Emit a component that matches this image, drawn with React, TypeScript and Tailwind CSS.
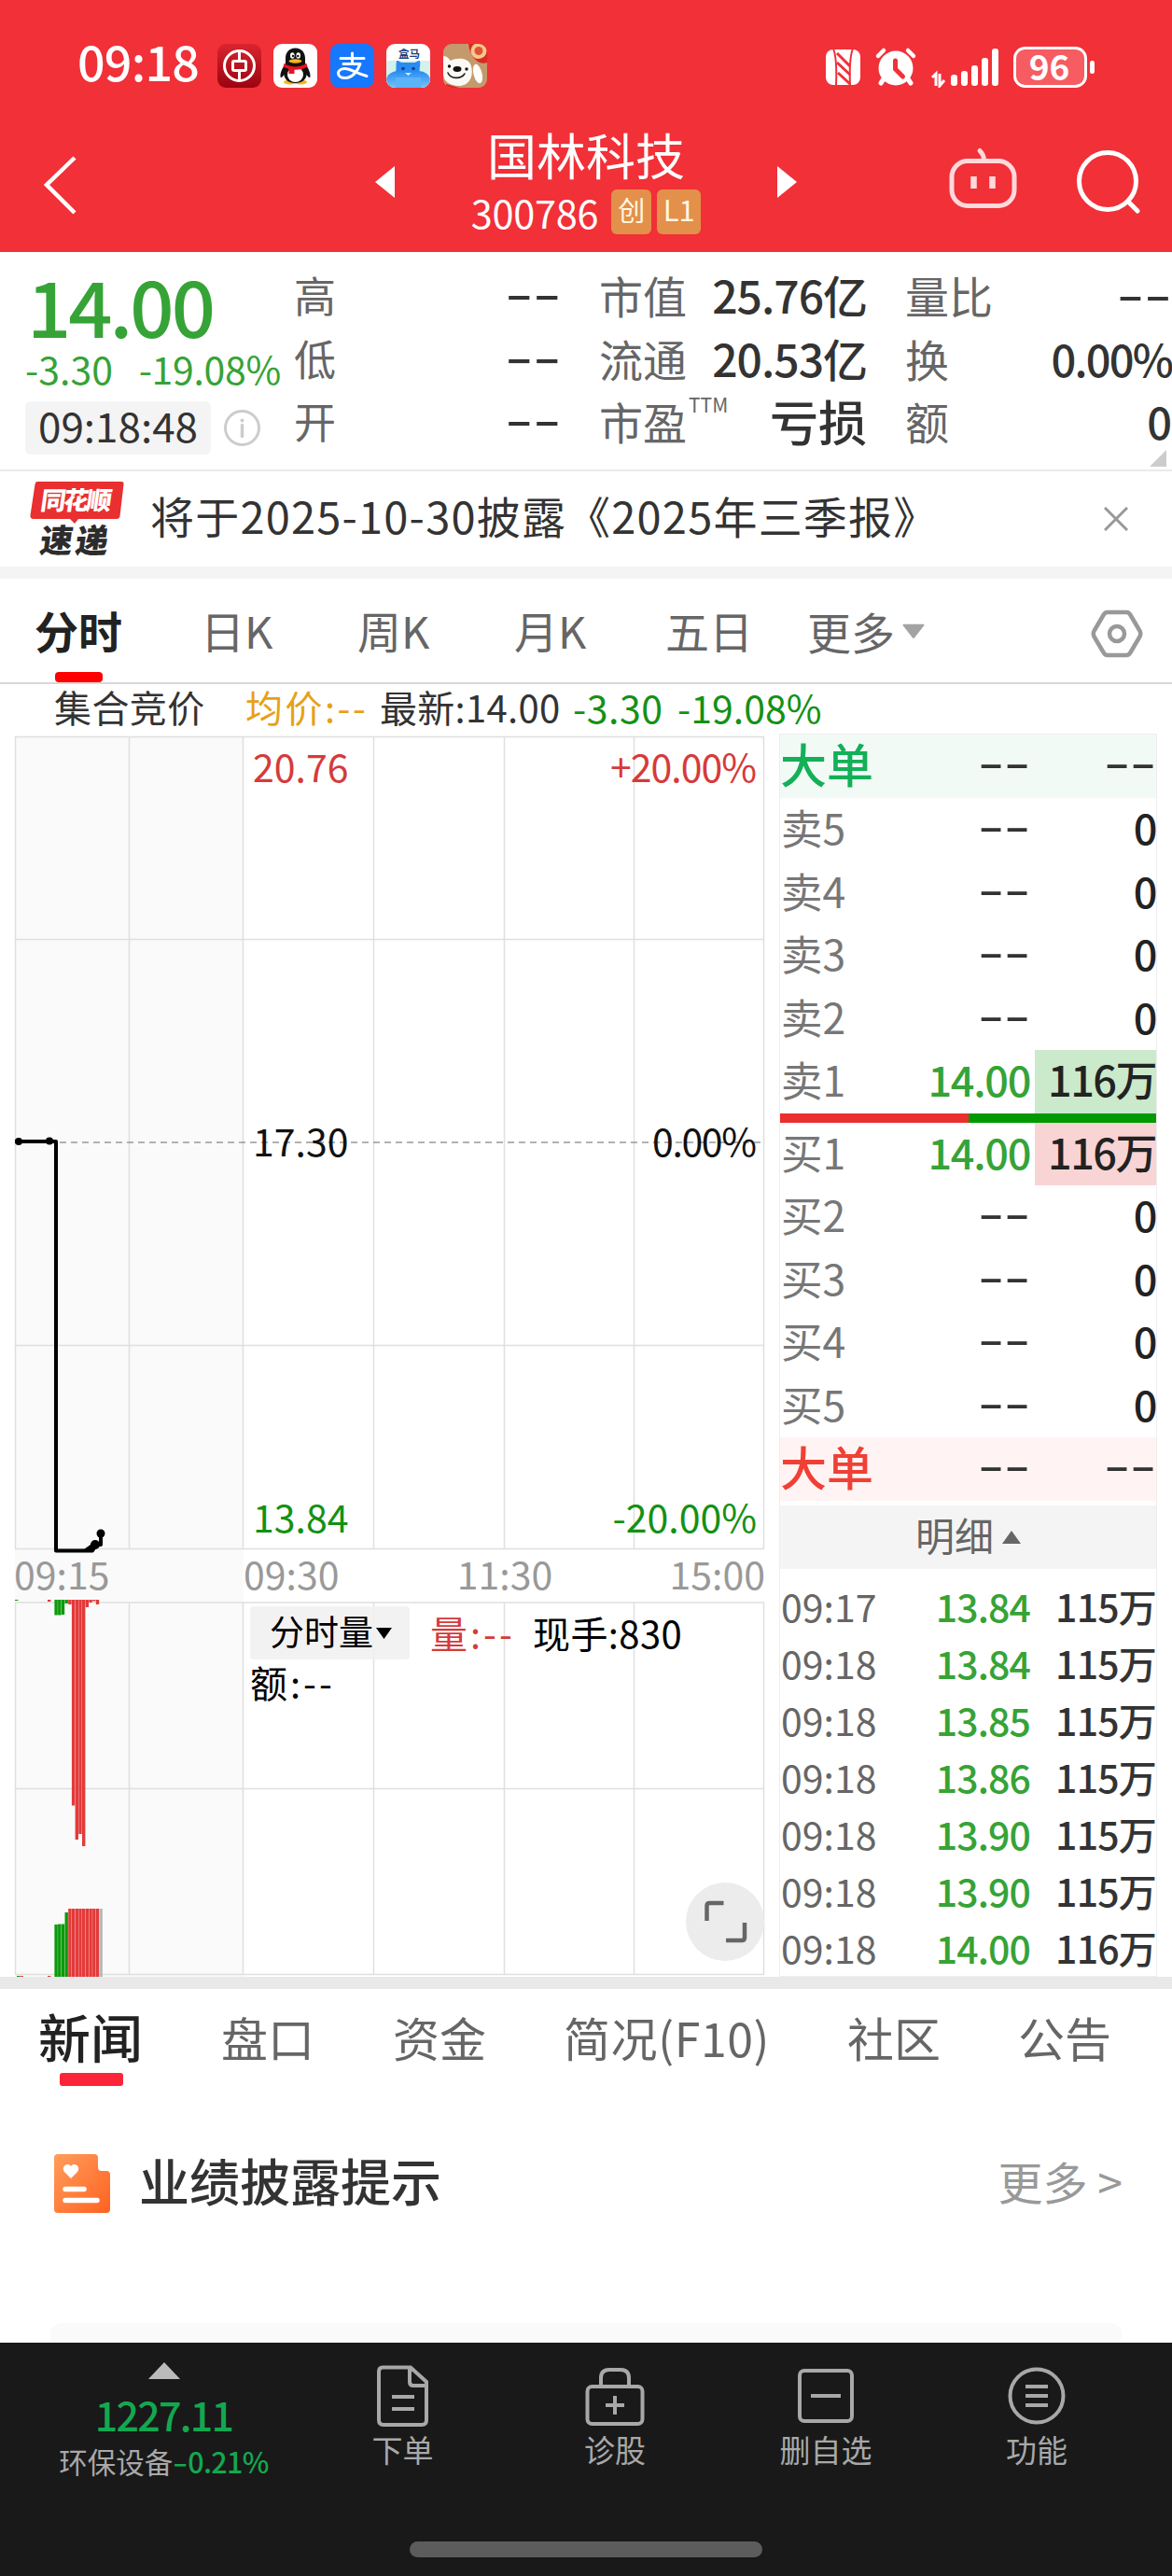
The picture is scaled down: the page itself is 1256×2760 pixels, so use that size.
import { ReactNode } from "react";

type BookRow = {
  label: string;
  price: string;
  volume: string;
  bg?: string;
};

const asks: BookRow[] = [
  { label: "卖5", price: "--", volume: "0" },
  { label: "卖4", price: "--", volume: "0" },
  { label: "卖3", price: "--", volume: "0" },
  { label: "卖2", price: "--", volume: "0" },
  { label: "卖1", price: "14.00", volume: "116万", bg: "bg-[#cbe9cb]" },
];

const bids: BookRow[] = [
  { label: "买1", price: "14.00", volume: "116万", bg: "bg-[#f9d4d4]" },
  { label: "买2", price: "--", volume: "0" },
  { label: "买3", price: "--", volume: "0" },
  { label: "买4", price: "--", volume: "0" },
  { label: "买5", price: "--", volume: "0" },
];

const trades = [
  { time: "09:17", price: "13.84", volume: "115万" },
  { time: "09:18", price: "13.84", volume: "115万" },
  { time: "09:18", price: "13.85", volume: "115万" },
  { time: "09:18", price: "13.86", volume: "115万" },
  { time: "09:18", price: "13.90", volume: "115万" },
  { time: "09:18", price: "13.90", volume: "115万" },
  { time: "09:18", price: "14.00", volume: "116万" },
];

const GREEN = "#0b9a0b";
const RED = "#e33a3a";

// unmatched volume, hanging from the top of the volume chart
const topBars = [
  { x: 16, to: 1715, color: GREEN },
  { x: 51, to: 1716, color: RED },
  { x: 58.4, to: 1730.5, color: GREEN },
  { x: 62.1, to: 1730.5, color: GREEN },
  { x: 65.8, to: 1730, color: GREEN },
  { x: 69.5, to: 1718, color: GREEN },
  { x: 73.2, to: 1719, color: RED },
  { x: 76.9, to: 1934.5, color: RED },
  { x: 80.6, to: 1971, color: RED },
  { x: 84.3, to: 1965, color: RED },
  { x: 88, to: 1978, color: RED },
  { x: 91.7, to: 1722, color: RED },
  { x: 95.4, to: 1717, color: RED },
  { x: 99.1, to: 1715.5, color: RED },
  { x: 102.8, to: 1719, color: RED },
];

// matched volume, standing on the bottom edge
const bottomBars = [
  { x: 18, from: 2117, color: GREEN },
  { x: 21.5, from: 2117, color: RED },
  { x: 51, from: 2117, color: RED },
  { x: 58.4, from: 2062, color: GREEN },
  { x: 62.1, from: 2061.5, color: GREEN },
  { x: 65.8, from: 2061.5, color: GREEN },
  { x: 69.5, from: 2049, color: GREEN },
  { x: 73.2, from: 2045, color: RED },
  { x: 76.9, from: 2045, color: RED },
  { x: 80.6, from: 2045, color: RED },
  { x: 84.3, from: 2045, color: RED },
  { x: 88, from: 2045, color: RED },
  { x: 91.7, from: 2045, color: RED },
  { x: 95.4, from: 2045, color: RED },
  { x: 99.1, from: 2045, color: RED },
  { x: 102.8, from: 2045, color: RED },
  { x: 106.5, from: 2045, color: "#b9b9b9" },
];

function Dashes() {
  return (
    <span className="inline-block origin-right -translate-y-[3px] scale-x-[1.75] font-medium tracking-normal">
      --
    </span>
  );
}

function Value({ text }: { text: string }) {
  return text === "--" ? <Dashes /> : <>{text}</>;
}

function StatusBar() {
  return (
    <div className="flex h-[140px] items-center pl-[83px] text-white">
      <span className="w-[150px] -translate-y-[5px] text-[52px] leading-none font-medium tracking-[-0.8px]">
        09:18
      </span>
      <div className="flex gap-[13.400px]">
        <svg width="47" height="47" viewBox="0 0 47 47">
          <defs>
            <linearGradient id="boc" x1="0" y1="0" x2="0" y2="1">
              <stop offset="0" stopColor="#d9252f" />
              <stop offset="1" stopColor="#9b0310" />
            </linearGradient>
          </defs>
          <rect width="47" height="47" rx="9" fill="url(#boc)" />
          <g fill="none" stroke="#fff" strokeWidth="3">
            <circle cx="23.500" cy="23.500" r="16" />
            <rect x="16.500" y="18.500" width="14" height="10" rx="1.500" />
            <path d="M23.500 8v10.500M23.500 28.500V39" />
          </g>
        </svg>
        <svg width="47" height="47" viewBox="0 0 47 47">
          <rect width="47" height="47" rx="9" fill="#fff" />
          <ellipse cx="18" cy="41" rx="7" ry="2.500" fill="#f5b51c" />
          <ellipse cx="29" cy="41" rx="7" ry="2.500" fill="#f5b51c" />
          <path
            d="M23.500 4.500c-7 0-10.500 5-10.500 11v5c-2 4-6 9-5.500 15 1 1.500 3-1 3.800-2.500C12 38 16 42 23.500 42S35 38 35.700 33c.8 1.500 2.800 4 3.800 2.500C40 29.500 36 24.500 34 20.500v-5c0-6-3.500-11-10.500-11z"
            fill="#111"
          />
          <ellipse cx="23.500" cy="33" rx="8.500" ry="8" fill="#fff" />
          <ellipse cx="20.300" cy="12.500" rx="2.300" ry="3.300" fill="#fff" />
          <ellipse cx="26.700" cy="12.500" rx="2.300" ry="3.300" fill="#fff" />
          <circle cx="21" cy="13" r="1.200" fill="#111" />
          <circle cx="26.300" cy="13" r="1.200" fill="#111" />
          <ellipse cx="23.500" cy="18.500" rx="7" ry="2.200" fill="#f5b51c" />
          <path
            d="M11.500 21c7 4.500 17 4.500 24 0l1 3.500c-4 2.500-9 3.500-14 3.200V32h-6v-5l-6-2.500z"
            fill="#e8141e"
          />
        </svg>
        <svg width="47" height="47" viewBox="0 0 47 47">
          <rect width="47" height="47" rx="9" fill="#1677ff" />
          <g
            fill="none"
            stroke="#fff"
            strokeWidth="3"
            strokeLinecap="round"
            strokeLinejoin="round"
          >
            <path d="M11 15.500h25M23.500 10v11.500M14 21.500h18c-2.500 7-8 15-16 15-5 0-7.500-2.500-7.500-5 0-3 3-5 7-5 6 0 12 5 23.500 8" />
          </g>
        </svg>
        <svg width="47" height="47" viewBox="0 0 47 47">
          <defs>
            <clipPath id="hema">
              <rect width="47" height="47" rx="9" />
            </clipPath>
            <linearGradient id="hippo" x1="0" y1="0" x2="0" y2="1">
              <stop offset="0" stopColor="#2a8cf0" />
              <stop offset="1" stopColor="#7cc8fb" />
            </linearGradient>
          </defs>
          <g clipPath="url(#hema)">
            <rect width="47" height="47" fill="#fff" />
            <path d="M0 18h47v29H0z" fill="#d4f2ec" />
            <path
              d="M11 18c3 0 4 2 6 2h13c2 0 3-2 6-2 1 5-1 8 0 13H10c1-5 0-8 1-13z"
              fill="#2a8cf0"
            />
            <ellipse cx="12.500" cy="39" rx="12.500" ry="10" fill="url(#hippo)" />
            <ellipse cx="34.500" cy="39" rx="12.500" ry="10" fill="url(#hippo)" />
            <rect x="10" y="36" width="27" height="11" fill="#5bb4f8" />
            <circle cx="18" cy="26.500" r="1.800" fill="#14408c" />
            <circle cx="29" cy="26.500" r="1.800" fill="#14408c" />
            <text
              x="24.500"
              y="14.500"
              fontSize="11.500"
              fontWeight="700"
              textAnchor="middle"
              fill="#1b3f80"
            >
              盒马
            </text>
          </g>
        </svg>
        <svg width="47" height="47" viewBox="0 0 47 47">
          <defs>
            <clipPath id="jd">
              <rect width="47" height="47" rx="9" />
            </clipPath>
          </defs>
          <g clipPath="url(#jd)">
            <rect width="47" height="47" fill="#c49a6c" />
            <path d="M27 0h20v20c-7 3-18-3-20-20z" fill="#d92a22" />
            <circle cx="38" cy="7.500" r="8.500" fill="#f7c98c" />
            <circle cx="38" cy="7.500" r="4.500" fill="#e0533a" />
            <ellipse
              cx="37"
              cy="32"
              rx="4.500"
              ry="10.500"
              transform="rotate(-14 37 32)"
              fill="#fff"
            />
            <path
              d="M0 13c4 0 6 3 8 5 8-4 20-3 22 6 3 12-3 21-13 21S0 40 0 32z"
              fill="#fbf9f5"
            />
            <path
              d="M5 31c3 7 14 7 18 1"
              fill="none"
              stroke="#222"
              strokeWidth="1.600"
              strokeLinecap="round"
            />
            <ellipse cx="15" cy="27" rx="4.500" ry="3" fill="#111" />
            <circle cx="6.500" cy="24" r="1.700" fill="#111" />
            <circle cx="25" cy="27" r="1.700" fill="#111" />
            <path d="M3 43l14 4H3z" fill="#d92a22" />
          </g>
        </svg>
      </div>
      <svg
        className="mt-[4px] ml-[363.400px]"
        width="290"
        height="44"
        viewBox="885 50 290 44"
        fill="#fff"
      >
        {/* NFC */}
        <rect x="885" y="53" width="37" height="38" rx="8" />
        <g fill="none" stroke="#f13038">
          <path d="M893 52c4 10 3.500 28 3 40M914 52c-4 10-3.500 28-3 40" strokeWidth="2" />
          <path
            d="M897 57l14 14M897 67l14 13M898 78l13 12"
            strokeWidth="3"
          />
        </g>
        {/* alarm */}
        <circle cx="960" cy="73" r="18.500" />
        <g strokeLinecap="round" strokeWidth="5">
          <path d="M941 60l6-6M979 60l-6-6" stroke="#fff" strokeWidth="4.500" />
          <path d="M948 83l-4 6M972 83l4 6" stroke="#fff" />
          <path
            d="M959.500 65v9l8 8"
            stroke="#f13038"
            fill="none"
            strokeLinejoin="round"
          />
        </g>
        {/* signal */}
        <path
          d="M999 83l4-4v13M1007 79v13l5-6"
          fill="none"
          stroke="#fff"
          strokeWidth="3"
        />
        <rect x="1019" y="80" width="7" height="12" rx="3" />
        <rect x="1030" y="76" width="7" height="16" rx="3" />
        <rect x="1041" y="70" width="7" height="22" rx="3" />
        <rect x="1052" y="62" width="7" height="30" rx="3" />
        <rect x="1063" y="52" width="7" height="40" rx="3" />
        {/* battery */}
        <rect
          x="1087.500"
          y="51.500"
          width="76"
          height="41"
          rx="11"
          fill="#f65c62"
          stroke="#fff"
          strokeWidth="3"
        />
        <rect x="1168" y="65" width="5" height="14" rx="2.500" />
        <text x="1124.500" y="85.500" fontSize="37" fontWeight="700" textAnchor="middle">
          96
        </text>
      </svg>
    </div>
  );
}

function TitleBar() {
  return (
    <div className="flex h-[130px] text-white">
      <svg
        width="400"
        height="130"
        viewBox="0 140 400 130"
        fill="none"
        stroke="#fff"
        strokeWidth="4.500"
      >
        <path d="M80 169L50 198l30 30" />
      </svg>
      <svg width="24" height="130" viewBox="400 140 24 130" fill="#fff">
        <path d="M423 178v34l-21-17z" />
      </svg>
      <div className="flex w-[408px] flex-col items-center">
        <div className="h-[60px] text-[53px] leading-[50px]">国林科技</div>
        <div className="flex items-center gap-[6px]">
          <span className="mr-[8px] text-[41.500px] leading-[54px] tracking-[-0.3px]">
            300786
          </span>
          <span className="h-[48px] w-[43px] rounded-md bg-[#e3904a] text-center text-[29px] leading-[43px] text-[#fff6e0]">
            创
          </span>
          <span className="h-[48px] w-[47px] rounded-md bg-[#e3904a] text-center text-[31px] leading-[42px] text-[#fff6e0]">
            L1
          </span>
        </div>
      </div>
      <svg width="24" height="130" viewBox="832 140 24 130" fill="#fff">
        <path d="M833 178v34l21-17z" />
      </svg>
      <svg width="400" height="130" viewBox="856 140 400 130" fill="none">
        <g stroke="#ffd9db" strokeWidth="5" strokeLinecap="round">
          <rect x="1020" y="172.500" width="67" height="48" rx="17" />
          <path d="M1050 161.500c3 3 4.500 6 4.500 10" />
          <path
            d="M1043.500 189v13M1063.500 189v13"
            strokeWidth="6.500"
            strokeLinecap="butt"
          />
        </g>
        <g stroke="#fff" strokeWidth="5" strokeLinecap="round">
          <circle cx="1187" cy="194" r="30.500" />
          <path d="M1209 216l10 10" />
        </g>
      </svg>
    </div>
  );
}

function Quote() {
  return (
    <div className="relative flex h-[235px] border-b-2 border-[#ebebeb] pt-[12px] leading-[67.500px] text-[#333]">
      <div className="w-[315px] pl-[27px] text-[#36a336]">
        <div className="mt-[8px] h-[72px] pl-[2px] text-[83px] leading-[72px] font-medium tracking-[-3px]">
          14.00
        </div>
        <div className="mt-[9px] flex h-[46px] justify-between pr-[14px] text-[41px] leading-[46px] whitespace-nowrap">
          <span>-3.30</span>
          <span className="tracking-[-0.3px]">-19.08%</span>
        </div>
        <div className="mt-[13px] flex items-center">
          <span className="h-[57px] w-[199px] rounded-md bg-[#f4f4f4] text-center text-[44px] leading-[50px] text-[#333]">
            09:18:48
          </span>
          <svg className="ml-[13px]" width="41" height="41" viewBox="0 0 41 41">
            <circle
              cx="20.500"
              cy="20.500"
              r="18"
              fill="none"
              stroke="#ccc"
              strokeWidth="3"
            />
            <circle cx="20.500" cy="12.500" r="2" fill="#ccc" />
            <path
              d="M20.500 17.500v12"
              stroke="#ccc"
              strokeWidth="3.500"
              strokeLinecap="round"
            />
          </svg>
        </div>
      </div>
      <div className="w-[46px] text-[45px] text-[#666]">
        <div>高</div>
        <div>低</div>
        <div>开</div>
      </div>
      <div className="w-[240px] text-right text-[48px]">
        <div>
          <Dashes />
        </div>
        <div>
          <Dashes />
        </div>
        <div>
          <Dashes />
        </div>
      </div>
      <div className="ml-[41px] w-[110px] text-[47px] whitespace-nowrap text-[#666]">
        <div>市值</div>
        <div>流通</div>
        <div className="flex">
          市盈
          <span className="ml-[2px] text-[21px] leading-[32px]">TTM</span>
        </div>
      </div>
      <div className="w-[177px] text-right text-[48px] font-medium whitespace-nowrap">
        <div className="tracking-[-1px]">25.76亿</div>
        <div className="tracking-[-1px]">20.53亿</div>
        <div className="text-[52px]">亏损</div>
      </div>
      <div className="ml-[41px] w-[110px] text-[47px] whitespace-nowrap text-[#666]">
        <div>量比</div>
        <div>换</div>
        <div>额</div>
      </div>
      <div className="flex-1 text-right text-[47px] font-medium">
        <div>
          <Dashes />
        </div>
        <div className="-ml-4 tracking-[-1.800px]">0.00%</div>
        <div>0</div>
      </div>
      <svg
        className="absolute right-[6px] bottom-[3px]"
        width="18"
        height="18"
        viewBox="0 0 18 18"
      >
        <path d="M18 0v18H0z" fill="#ccc" />
      </svg>
    </div>
  );
}

function Notice() {
  return (
    <div className="flex h-[102px] items-center pl-[32px]">
      <svg width="102" height="82" viewBox="32 514 102 82">
        <path
          d="M40 515h90q3 0 2.500 3l-4 34q-.5 3-3.500 3H84l-4 5-5-5H36q-4 0-3.500-4l5-33q.5-3 2.500-3z"
          fill="#e92f2f"
        />
        <g
          fontWeight="900"
          transform="translate(82 0) skewX(-8)"
          textAnchor="middle"
        >
          <text x="75" y="545" fontSize="27" fill="#fff" textLength="76">
            同花顺
          </text>
          <text x="79" y="591" fontSize="35" fill="#2c2c2c" textLength="73">
            速递
          </text>
        </g>
      </svg>
      <div className="ml-[27px] -translate-y-[5px] text-[47px] leading-none tracking-[1.200px] text-[#333]">
        将于2025-10-30披露《2025年三季报》
      </div>
      <svg
        className="mr-[47px] ml-auto"
        width="26"
        height="26"
        viewBox="0 0 26 26"
        stroke="#999"
        strokeWidth="3"
      >
        <path d="M1 1l24 24M25 1L1 25" />
      </svg>
    </div>
  );
}

function PeriodTabs() {
  return (
    <div className="flex h-[113px] border-b-2 border-[#d8d8d8] pl-[37px] text-[47px] leading-[110px] whitespace-nowrap text-[#666]">
      <div className="relative w-[178px] font-bold text-[#222]">
        分时
        <div className="absolute bottom-0 left-[22px] h-[11px] w-[51px] rounded-[4px] bg-[#f00]" />
      </div>
      <div className="w-[168px]">日K</div>
      <div className="w-[168px]">周K</div>
      <div className="w-[162px]">月K</div>
      <div className="w-[152px]">五日</div>
      <div className="flex flex-1 items-center">
        更多
        <svg className="mt-[2px] ml-[8px]" width="24" height="17" viewBox="0 0 26 17">
          <path d="M1 0h24q1 1 0 2L14 16q-1 1-2 0L1 2Q0 1 1 0z" fill="#a3a3a3" />
        </svg>
      </div>
      <svg
        className="mt-[31px] mr-[31px]"
        width="56"
        height="56"
        viewBox="0 0 56 56"
        fill="none"
        stroke="#999"
        strokeWidth="4.500"
        strokeLinejoin="round"
      >
        <path d="M18 5h20q3 0 4.500 3l10 17q1.500 3 0 6l-10 17q-1.500 3-4.500 3H18q-3 0-4.500-3l-10-17q-1.500-3 0-6l10-17q1.500-3 4.500-3z" />
        <circle cx="28" cy="28" r="8" />
      </svg>
    </div>
  );
}

function Ticker() {
  return (
    <div className="flex h-[53px] pl-[58px] text-[40px] leading-[49px] whitespace-nowrap text-[#333]">
      <span className="w-[205px] tracking-[0.4px]">集合竞价</span>
      <span className="w-[144px] tracking-[2.500px] text-[#e6a117]">均价:--</span>
      <span className="w-[207px] tracking-[0.3px]">最新:14.00</span>
      <span className="w-[112px] text-[41px] tracking-[0.5px] text-[#149114]">
        -3.30
      </span>
      <span className="text-[41px] text-[#149114]">-19.08%</span>
    </div>
  );
}

function Chart() {
  return (
    <div className="relative h-[1332px] w-[835px]">
      <svg width="835" height="1332" viewBox="0 786 835 1332" fontSize="41">
        <rect x="16" y="789" width="245" height="1329" fill="#fafafa" />
        <g stroke="#dfdfdf" strokeWidth="1.500">
          {[16.5, 138.5, 260.5, 400.5, 540.5, 679.5, 818.5].map((x) => (
            <path key={x} d={`M${x} 789V1659M${x} 1717V2115`} />
          ))}
          {[789.5, 1006.5, 1441.5, 1659.5, 1717, 1916.5, 2115.5].map((y) => (
            <path key={y} d={`M16 ${y}H819`} />
          ))}
        </g>
        <path
          d="M16 1224H819"
          stroke="#999"
          strokeWidth="1.500"
          strokeDasharray="7 5"
        />
        {topBars.map((bar) => (
          <rect
            key={bar.x}
            x={bar.x}
            y={1714}
            width="3.400"
            height={bar.to - 1714}
            fill={bar.color}
          />
        ))}
        {bottomBars.map((bar) => (
          <rect
            key={bar.x}
            x={bar.x}
            y={bar.from}
            width="3.400"
            height={2118 - bar.from}
            fill={bar.color}
          />
        ))}
        <path
          d="M16 1223H60V1661.500H99L103 1655H108V1643"
          fill="none"
          stroke="#000"
          strokeWidth="4"
          strokeLinejoin="round"
        />
        <path d="M90 1660L101 1652L105 1656L100 1662z" />
        <circle cx="20" cy="1223" r="4" />
        <circle cx="53" cy="1222.500" r="4" />
        <circle cx="102" cy="1655" r="5" />
        <circle cx="108" cy="1643" r="4.500" />
        <g fill="#d63a3a">
          <text x="271" y="837.500">20.76</text>
          <text x="811" y="837.500" textAnchor="end" textLength="157">
            +20.00%
          </text>
        </g>
        <g fill="#111">
          <text x="271" y="1239">17.30</text>
          <text x="811" y="1239" textAnchor="end" textLength="112">
            0.00%
          </text>
        </g>
        <g fill="#149114">
          <text x="271" y="1641.500">13.84</text>
          <text x="811" y="1641.500" textAnchor="end">
            -20.00%
          </text>
        </g>
        <g fill="#999">
          <text x="15" y="1703">09:15</text>
          <text x="261" y="1703">09:30</text>
          <text x="541" y="1703" textAnchor="middle">
            11:30
          </text>
          <text x="820" y="1703" textAnchor="end">
            15:00
          </text>
        </g>
      </svg>
      <div className="absolute top-[935px] left-[268px] flex items-center text-[40px] leading-[56px] whitespace-nowrap text-black">
        <div className="flex h-[57px] w-[171px] items-center rounded bg-[#f1f1f1]/90 pl-[21px] text-[37px] leading-[52px]">
          <span className="-mt-[6px]">分时量</span>
          <svg className="ml-[3px]" width="17" height="12" viewBox="0 0 17 12">
            <path d="M0 0h17L8.500 12z" />
          </svg>
        </div>
        <span className="-mt-[2px] ml-[22px] w-[110px] tracking-[3px] text-[#d63a3a]">
          量:--
        </span>
        <span className="-mt-[2px] tracking-[0.4px]">现手:830</span>
      </div>
      <div className="absolute top-[990px] left-[268px] text-[40px] leading-[52px] tracking-[3px] text-black">
        额:--
      </div>
      <div className="absolute top-[1231px] left-[735px] h-[84px] w-[84px] rounded-full bg-[#ececec]">
        <svg
          width="84"
          height="84"
          viewBox="0 0 84 84"
          fill="none"
          stroke="#666"
          strokeWidth="4.500"
        >
          <path d="M22.500 41V25q0-3 3-3h15M43 62h17q3 0 3-3V43" />
        </svg>
      </div>
    </div>
  );
}

function BookLine({ row }: { row: BookRow }) {
  return (
    <div className="flex h-[67.500px] leading-[61px]">
      <div className="w-[110px] pl-px text-[44.500px] text-[#777]">{row.label}</div>
      <div
        className={
          row.price === "--"
            ? "w-[158px] text-right text-[45px] text-[#333]"
            : "w-[158px] text-right text-[45px] font-medium tracking-[-1.300px] text-[#36a336]"
        }
      >
        <Value text={row.price} />
      </div>
      <div
        className={`ml-[5px] flex-1 text-right text-[45px] font-medium tracking-[-1.500px] whitespace-nowrap text-[#222] ${row.bg ?? ""}`}
      >
        {row.volume}
      </div>
    </div>
  );
}

function BigOrders({ className }: { className: string }) {
  return (
    <div className={`flex h-[68px] text-[45px] leading-[61px] ${className}`}>
      <div className="w-[110px] text-[50px] font-medium whitespace-nowrap">
        大单
      </div>
      <div className="w-[158px] text-right text-[#333]">
        <Dashes />
      </div>
      <div className="flex-1 text-right text-[#333]">
        <Dashes />
      </div>
    </div>
  );
}

function OrderBook() {
  return (
    <div className="h-[1332px] w-[405px] border border-[#eee]">
      <BigOrders className="bg-[#f2faf6] text-[#13b058]" />
      {asks.map((row) => (
        <BookLine key={row.label} row={row} />
      ))}
      <div className="flex h-[10px]">
        <div className="w-1/2 bg-[#ea2f2f]" />
        <div className="w-1/2 bg-[#009a00]" />
      </div>
      {bids.map((row) => (
        <BookLine key={row.label} row={row} />
      ))}
      <BigOrders className="bg-[#fff4f3] text-[#f04035]" />
      <div className="mt-[5px] flex h-[68px] items-center justify-center bg-[#f4f4f4] text-[42px] leading-[60px] text-[#666]">
        <span className="-mt-[7px]">明细</span>
        <svg className="ml-[9px]" width="20" height="14" viewBox="0 0 20 14">
          <path d="M10 0l10 14H0z" fill="#666" />
        </svg>
      </div>
      <div className="mt-[9px]">
        {trades.map((trade, index) => (
          <div
            key={index}
            className="flex h-[61px] text-[41px] leading-[61px] whitespace-nowrap text-[#333]"
          >
            <div className="w-[110px] pl-px text-[#666]">{trade.time}</div>
            <div className="w-[158px] text-right font-medium tracking-[-0.9px] text-[#36a336]">
              {trade.price}
            </div>
            <div className="flex-1 text-right font-medium tracking-[-0.8px]">
              {trade.volume}
            </div>
          </div>
        ))}
      </div>
    </div>
  );
}

function InfoTabs() {
  return (
    <div className="flex h-[107px] pl-[41px] text-[50px] leading-[102px] whitespace-nowrap text-[#666]">
      <div className="relative w-[196px] text-[56px] leading-[99px] font-medium text-[#222]">
        新闻
        <div className="absolute bottom-[3px] left-[23px] h-[14px] w-[68px] rounded-[3px] bg-[#fb2438]" />
      </div>
      <div className="w-[184px]">盘口</div>
      <div className="w-[183px]">资金</div>
      <div className="w-[304px] tracking-[0.6px]">简况(F10)</div>
      <div className="w-[183px]">社区</div>
      <div>公告</div>
    </div>
  );
}

function Disclosure() {
  return (
    <div className="flex h-[272px] flex-col">
      <div className="flex h-[204px] items-center pr-[53px] pl-[57px]">
        <svg width="62" height="66" viewBox="0 0 62 66">
          <defs>
            <linearGradient id="doc" x1="0" y1="0" x2="1" y2="1">
              <stop offset="0" stopColor="#ff9d5c" />
              <stop offset="1" stopColor="#ff6220" />
            </linearGradient>
          </defs>
          <path
            d="M5 1h39q4 0 4 4v10q0 4 4 4h5q4 0 4 4v37q0 4-4 4H5q-4 0-4-4V5q0-4 4-4z"
            fill="url(#doc)"
          />
          <path
            d="M19 27l-7-7c-4-5 3-11 7-6 4-5 11 1 7 6z"
            fill="#fff"
          />
          <path
            d="M13 38.500h20M13 50.500h34"
            stroke="#fff"
            strokeWidth="5.500"
            strokeLinecap="round"
          />
        </svg>
        <span className="ml-[30px] -translate-y-[4px] text-[54px] leading-none font-medium text-[#333]">
          业绩披露提示
        </span>
        <span className="ml-auto -translate-y-[4px] text-[48px] leading-none text-[#999]">
          更多 &gt;
        </span>
      </div>
      <div className="mx-[54px] mt-[47px] h-[21px] rounded-t-xl bg-[#fafafa]" />
    </div>
  );
}

function NavItem({ label, width, children }: { label: string; width: string; children: ReactNode }) {
  return (
    <div className={`flex flex-col items-center pt-[23px] text-[33px] ${width}`}>
      <svg
        width="68"
        height="68"
        viewBox="0 0 68 68"
        fill="none"
        stroke="#a8a8a8"
        strokeWidth="4"
      >
        {children}
      </svg>
      <span className="leading-[47px] text-[#a8a8a8]">{label}</span>
    </div>
  );
}

function BottomNav() {
  return (
    <div className="h-[250px] bg-[#191919]">
      <div className="flex h-[213px]">
        <div className="flex w-[318px] flex-col items-center pt-[21px] pl-[33px]">
          <svg width="34" height="18" viewBox="0 0 34 18">
            <path d="M17 0l17 18H0z" fill="#bbb" />
          </svg>
          <div className="mt-[13px] text-[43px] leading-[48px] font-medium tracking-[-1.800px] text-[#13a850]">
            1227.11
          </div>
          <div className="mt-[7px] text-[30.500px] leading-[40px] whitespace-nowrap text-[#a8a8a8]">
            环保设备
            <span className="inline-block origin-left scale-x-150 font-medium text-[#13a850]">
              -
            </span>
            <span className="ml-[5px] font-medium tracking-[-0.7px] text-[#13a850]">
              0.21%
            </span>
          </div>
        </div>
        <NavItem label="下单" width="w-[227px]">
          <path d="M12 3.500h30L59 19v41q0 5-5 5H13q-5 0-5-5V8q0-4.500 4-4.500zM41 4v15q0 4 4 4h13M22 35h24M22 48h24" />
        </NavItem>
        <NavItem label="诊股" width="w-[228px]">
          <rect x="4.500" y="24" width="59" height="40" rx="5" />
          <path d="M19 24V15q0-9 9-9h12q9 0 9 9v9M34 34v20M24 44h20" />
        </NavItem>
        <NavItem label="删自选" width="w-[224px]">
          <rect x="6" y="7" width="56" height="54" rx="5" />
          <path d="M18 34h32" />
        </NavItem>
        <NavItem label="功能" width="w-[228px]">
          <circle cx="34" cy="34" r="28.500" />
          <path d="M22 24h24M22 34h24M22 44h24" />
        </NavItem>
      </div>
      <div className="mx-auto h-[17px] w-[378px] rounded-full bg-[#5c5c5c]" />
    </div>
  );
}

export default function App() {
  return (
    <div className="h-[2760px] w-[1256px] overflow-hidden bg-white font-['Noto_Sans_CJK_SC',sans-serif]">
      <div className="h-[270px] bg-[#f13038]">
        <StatusBar />
        <TitleBar />
      </div>
      <Quote />
      <Notice />
      <div className="h-[13px] bg-[#f4f4f4]" />
      <PeriodTabs />
      <Ticker />
      <div className="flex">
        <Chart />
        <OrderBook />
      </div>
      <div className="h-[13px] bg-[#e9e9e9]" />
      <InfoTabs />
      <Disclosure />
      <BottomNav />
    </div>
  );
}
